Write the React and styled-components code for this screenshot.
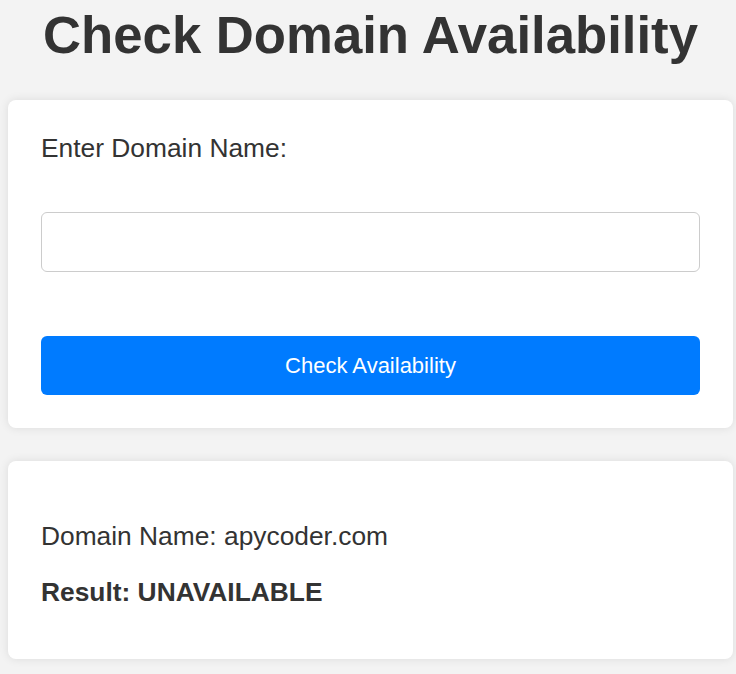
import React, { useState } from "react";
import styled, { createGlobalStyle } from "styled-components";

const GlobalStyle = createGlobalStyle`
  body {
    margin: 0;
    background: #f3f3f3;
    font-family: "Liberation Sans", Arial, sans-serif;
    color: #333;
  }
`;

const Page = styled.div`
  padding: 0 3px 0 8px;
`;

const Title = styled.h1`
  margin: 4px 0 35px 0;
  font-size: 52.7px;
  font-weight: 700;
  text-align: center;
  color: #333;
`;

const Card = styled.div`
  background: #fff;
  border-radius: 8px;
  box-shadow: 0 0 10px rgba(0, 0, 0, 0.1);
  padding: ${(p) => p.$padding || "33px"};
  margin-bottom: 33px;
`;

const Label = styled.label`
  display: block;
  font-size: 26.35px;
  margin-bottom: 48px;
`;

const Input = styled.input`
  display: block;
  box-sizing: border-box;
  width: 100%;
  height: 60px;
  padding: 10px 16px;
  border: 1px solid #ccc;
  border-radius: 6px;
  font-size: 22px;
  font-family: inherit;
  outline: none;
`;

const Button = styled.button`
  display: block;
  width: 100%;
  height: 59px;
  margin-top: 64px;
  border: none;
  border-radius: 6px;
  background: #007bff;
  color: #fff;
  font-size: 22px;
  font-family: inherit;
  cursor: pointer;
`;

const Line = styled.p`
  margin: 0;
  font-size: 26.35px;
  font-weight: ${(p) => (p.$bold ? 700 : 400)};
  & + & {
    margin-top: 25px;
  }
`;

export default function App() {
  const [domain, setDomain] = useState("");

  return (
    <>
      <GlobalStyle />
      <Page>
        <Title>Check Domain Availability</Title>
        <Card>
          <Label htmlFor="domain">Enter Domain Name:</Label>
          <Input
            id="domain"
            value={domain}
            onChange={(e) => setDomain(e.target.value)}
          />
          <Button>Check Availability</Button>
        </Card>
        <Card $padding="60px 33px 51px 33px">
          <Line>Domain Name: apycoder.com</Line>
          <Line $bold>Result: UNAVAILABLE</Line>
        </Card>
      </Page>
    </>
  );
}
